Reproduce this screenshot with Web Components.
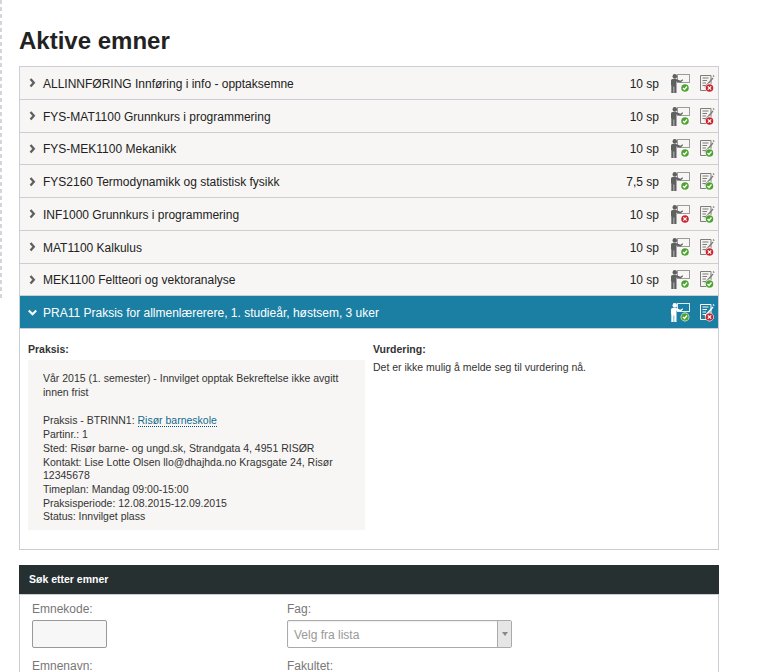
<!DOCTYPE html>
<html lang="no">
<head>
<meta charset="utf-8">
<title>Aktive emner</title>
<style>
  html, body { margin: 0; background: #fff; }
  body { font: 12px/15px "Liberation Sans", Arial, sans-serif; color: #222; height: 672px; overflow: hidden; }
  course-detail p { margin: 0 0 15px; }
  course-detail p:last-child { margin: 0; }
</style>
</head>
<body>
<page-shell>
  <h-title>Aktive emner</h-title>
  <course-list>
    <course-row code="ALLINNFØRING Innføring i info - opptaksemne" points="10 sp" teach="ok" exam="err"></course-row>
    <course-row code="FYS-MAT1100 Grunnkurs i programmering" points="10 sp" teach="ok" exam="err"></course-row>
    <course-row code="FYS-MEK1100 Mekanikk" points="10 sp" teach="ok" exam="ok"></course-row>
    <course-row code="FYS2160 Termodynamikk og statistisk fysikk" points="7,5 sp" teach="ok" exam="ok"></course-row>
    <course-row code="INF1000 Grunnkurs i programmering" points="10 sp" teach="err" exam="ok"></course-row>
    <course-row code="MAT1100 Kalkulus" points="10 sp" teach="ok" exam="err"></course-row>
    <course-row code="MEK1100 Feltteori og vektoranalyse" points="10 sp" teach="ok" exam="ok"></course-row>
    <course-row open code="PRA11 Praksis for allmenlærerere, 1. studieår, høstsem, 3 uker" teach="ok" exam="err"></course-row>
    <course-detail>
      <div slot="left">
        <p>Vår 2015 (1. semester) - Innvilget opptak Bekreftelse ikke avgitt innen frist</p>
        <p>Praksis - BTRINN1: <school-link>Risør barneskole</school-link><br>
        Partinr.: 1<br>
        Sted: Risør barne- og ungd.sk, Strandgata 4, 4951 RISØR<br>
        Kontakt: Lise Lotte Olsen llo@dhajhda.no Kragsgate 24, Risør 12345678<br>
        Timeplan: Mandag 09:00-15:00<br>
        Praksisperiode: 12.08.2015-12.09.2015<br>
        Status: Innvilget plass</p>
      </div>
      <span slot="right">Det er ikke mulig å melde seg til vurdering nå.</span>
    </course-detail>
  </course-list>
  <search-panel></search-panel>
</page-shell>

<script>
const green = '#4da32f', red = '#c9252f';

class PageShell extends HTMLElement {
    constructor() {
        super();
        this.attachShadow({ mode: 'open' }).innerHTML = `
      <style>
        :host { display: block; height: 672px; box-sizing: border-box; padding: 26px 0 0 19px;
                background: repeating-linear-gradient(to bottom, #d3d4dc 0 4px, transparent 4px 7px) 0 0 / 2px 300px no-repeat; }
        .w { width: 700px; }
      </style>
      <div class="w"><slot></slot></div>`;
    }
}

class HTitle extends HTMLElement {
    constructor() {
        super();
        this.attachShadow({ mode: 'open' }).innerHTML = `
      <style>
        :host { display: block; font: bold 24px/30px "Liberation Sans", Arial, sans-serif; color: #222; margin-bottom: 10px; }
      </style>
      <slot></slot>`;
    }
}

class CourseList extends HTMLElement {
    constructor() {
        super();
        this.attachShadow({ mode: 'open' }).innerHTML = `
      <style>
        :host { display: block; box-sizing: border-box; border: 1px solid #ccced6; border-bottom-color: #ccc; }
      </style>
      <slot></slot>`;
    }
}

// small badge shared by the two status icons
const badge = (state, x, y) => state === 'ok'
    ? `<circle cx="${x}" cy="${y}" r="4.4" fill="#fff"/><circle cx="${x}" cy="${y}" r="3.8" fill="${green}"/><path d="M${x - 2} ${y}l1.500 1.500 2.500-3" fill="none" stroke="#fff" stroke-width="1.300"/>`
    : `<circle cx="${x}" cy="${y}" r="4.4" fill="#fff"/><circle cx="${x}" cy="${y}" r="3.8" fill="${red}"/><path d="M${x - 1.7} ${y - 1.700}l3.400 3.400m0-3.400l-3.400 3.400" fill="none" stroke="#fff" stroke-width="1.200"/>`;

class TeachIcon extends HTMLElement {
    constructor() {
        super();
        const light = this.hasAttribute('light');
        const body = light ? '#fff' : '#5f6060';
        const board = light ? '#dcebf1' : '#9a9a9a';
        this.attachShadow({ mode: 'open' }).innerHTML = `
      <style>:host { display: block; width: 20px; height: 19px; } svg { display: block; }</style>
      <svg width="20" height="19" viewBox="0 0 20 19">
        <rect x="6.500" y="0.500" width="12" height="8" fill="none" stroke="${board}"/>
        <circle cx="3.800" cy="2.400" r="2.300" fill="${body}"/>
        <path d="M0 6.500q0-1.500 1.500-1.500h3.500l4.500 1.800 2-1.500.6 1-2.500 2.300-4.100-1v11.400h-2.300v-6.500h-.6v6.500h-2.300v-7.500l-.3-.3z" fill="${body}"/>
        ${badge(this.getAttribute('state'), 14, 14)}
      </svg>`;
    }
}

class ExamIcon extends HTMLElement {
    constructor() {
        super();
        const light = this.hasAttribute('light');
        const ink = light ? '#fff' : '#7d7d7d';
        const paper = light ? '#1b7fa4' : '#f4f3ef';
        this.attachShadow({ mode: 'open' }).innerHTML = `
      <style>:host { display: block; width: 15px; height: 19px; } svg { display: block; }</style>
      <svg width="15" height="19" viewBox="0 0 15 19">
        <path d="M.5 1.500h10.500v15h-10.500z" fill="${paper}" stroke="${ink}"/>
        <path d="M2.500 4h6M2.500 6.500h4.500M2.500 9h3.500M2.500 11.500h3.500" stroke="${ink}"/>
        <path d="M5 12l7.500-8.500 1 1-7.500 8.500-1.500.4z" fill="${ink}"/>
        <path d="M13 1.500l1.200 1.200" stroke="${ink}" stroke-width="1.200"/>
        ${badge(this.getAttribute('state'), 9.5, 14)}
      </svg>`;
    }
}

class CourseRow extends HTMLElement {
    constructor() {
        super();
        const open = this.hasAttribute('open');
        const light = open ? 'light' : '';
        this.attachShadow({ mode: 'open' }).innerHTML = `
      <style>
        :host { display: flex; align-items: center; box-sizing: border-box; height: 32.75px; padding: 1px 3px 0 8px;
                background: ${open ? '#1b7fa4' : '#f7f6f4'}; color: ${open ? '#fff' : '#222'};
                border-bottom: 1px solid #ccced6; font-size: 12px; }
        svg.arrow { flex: none; width: 15px; height: 12px; }
        .name { flex: 1; white-space: nowrap; position: relative; top: 1px; }
        .sp { margin-right: 12px; position: relative; top: 1px; }
        teach-icon { margin-right: 9px; }
      </style>
      ${open
        ? '<svg class="arrow" viewBox="0 0 15 12"><path d="M.8 3.500l3.700 3.700 3.700-3.700" fill="none" stroke="#fff" stroke-width="2.200"/></svg>'
        : '<svg class="arrow" viewBox="0 0 15 12"><path d="M2.500 2l3.300 3.800-3.300 3.800" fill="none" stroke="#5f5f5f" stroke-width="2.300"/></svg>'}
      <span class="name">${this.getAttribute('code')}</span>
      ${this.getAttribute('points') ? `<span class="sp">${this.getAttribute('points')}</span>` : ''}
      <teach-icon ${light} state="${this.getAttribute('teach')}"></teach-icon>
      <exam-icon ${light} state="${this.getAttribute('exam')}"></exam-icon>`;
    }
}

class CourseDetail extends HTMLElement {
    constructor() {
        super();
        this.attachShadow({ mode: 'open' }).innerHTML = `
      <style>
        :host { display: grid; grid-template-columns: 345px 1fr; height: 220px; box-sizing: border-box; padding: 13px 8px 0 8px; font-size: 10.500px; line-height: 13.7px; color: #333; }
        h4 { margin: 0 0 3px; font-size: 10.500px; line-height: 15px; font-weight: bold; color: #333; }
        h4.r { margin-bottom: 4px; }
        .box { width: 337px; box-sizing: border-box; height: 170px; background: #f7f6f4; padding: 12px 15px; }
      </style>
      <div>
        <h4>Praksis:</h4>
        <div class="box"><slot name="left"></slot></div>
      </div>
      <div>
        <h4 class="r">Vurdering:</h4>
        <slot name="right"></slot>
      </div>`;
    }
}

class SchoolLink extends HTMLElement {
    constructor() {
        super();
        this.attachShadow({ mode: 'open' }).innerHTML = `
      <style>:host { display: inline; color: #0f6b8e; border-bottom: 1px dotted #0f4f6a; }</style>
      <slot></slot>`;
    }
}

class SearchPanel extends HTMLElement {
    constructor() {
        super();
        this.attachShadow({ mode: 'open' }).innerHTML = `
      <style>
        :host { display: block; margin-top: 15px; }
        .head { background: #263031; color: #fff; height: 29px; box-sizing: border-box; padding: 0 10px; font: bold 10.500px/29px "Liberation Sans", Arial, sans-serif; }
        .body { border: 1px solid #ccced6; display: grid; grid-template-columns: 255px 1fr; padding: 7px 12px 0; color: #777; font-size: 12px; line-height: 15px; height: 90px; }
        .field { height: 57px; }
        .inp { width: 75px; height: 28px; box-sizing: border-box; margin-top: 3px; background: #f7f7f7; border: 1px solid #999; border-radius: 2px; }
        .sel { display: flex; width: 225px; height: 28px; box-sizing: border-box; margin-top: 3px; border: 1px solid #aaa; border-radius: 2px; line-height: 28px; color: #999; box-shadow: inset 0 1px 2px #eee; }
        .sel span { flex: 1; padding-left: 6px; }
        .sel b { width: 13px; border-left: 1px solid #aaa; background: #e6e6e6; display: flex; align-items: center; justify-content: center; }
        .sel b::after { content: ""; border: 3px solid transparent; border-top: 4px solid #888; border-bottom: 0; }
      </style>
      <div class="head">Søk etter emner</div>
      <div class="body">
        <div class="field">Emnekode:<div class="inp"></div></div>
        <div class="field">Fag:<div class="sel"><span>Velg fra lista</span><b></b></div></div>
        <div class="field">Emnenavn:</div>
        <div class="field">Fakultet:</div>
      </div>`;
    }
}

customElements.define('page-shell', PageShell);
customElements.define('h-title', HTitle);
customElements.define('course-list', CourseList);
customElements.define('teach-icon', TeachIcon);
customElements.define('exam-icon', ExamIcon);
customElements.define('course-row', CourseRow);
customElements.define('course-detail', CourseDetail);
customElements.define('school-link', SchoolLink);
customElements.define('search-panel', SearchPanel);
</script>
</body>
</html>
